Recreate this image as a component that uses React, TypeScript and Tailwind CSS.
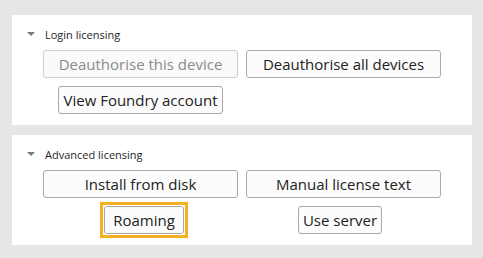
import React from 'react';

function Btn({ label, disabled, className = '' }: { label: string; disabled?: boolean; className?: string }) {
  return (
    <button
      disabled={disabled}
      className={
        'h-[28px] rounded-[3px] border px-1 text-[15px] leading-none ' +
        (disabled
          ? 'border-[#cfcfcf] bg-[#fafafa] text-[#8a8a8a] '
          : 'border-[#a9a9a9] bg-[#fcfcfc] text-[#222] ') +
        className
      }
    >
      {label}
    </button>
  );
}

function Section({ title, children }: { title: string; children: React.ReactNode }) {
  return (
    <section className="bg-white pt-[13px] pb-[11px] pl-[31px] pr-[31px]">
      <div className="-ml-[16px] flex h-[14px] items-center gap-[10px]">
        <svg width="8" height="5" viewBox="0 0 8 5" className="mt-[-1px]">
          <path d="M0 0 H8 L4 4 Z" fill="#7a7a7a" />
        </svg>
        <span className="text-[11px] text-[#1e1e1e]">{title}</span>
      </div>
      <div className="mt-[8px]">{children}</div>
    </section>
  );
}

export default function App() {
  return (
    <div
      className="flex h-[258px] w-[483px] flex-col gap-[10px] bg-[#e6e6e6] pt-[15px] pl-[12px] pr-[11px]"
      style={{ fontFamily: '"Open Sans", sans-serif' }}
    >
      <Section title="Login licensing">
        <div className="grid grid-cols-2 gap-x-[8px] gap-y-[8px]">
          <Btn label="Deauthorise this device" disabled />
          <Btn label="Deauthorise all devices" />
          <Btn label="View Foundry account" className="justify-self-center" />
        </div>
      </Section>
      <Section title="Advanced licensing">
        <div className="grid grid-cols-2 gap-x-[8px] gap-y-[8px]">
          <Btn label="Install from disk" />
          <Btn label="Manual license text" />
          {/* focused button: square orange focus frame */}
          <div className="-my-[4px] ml-[7px] flex justify-self-center border-[3px] border-[#f6b024] p-[1px]">
            <Btn label="Roaming" className="min-w-[80px]" />
          </div>
          <Btn label="Use server" className="mr-[7px] justify-self-center" />
        </div>
      </Section>
    </div>
  );
}
